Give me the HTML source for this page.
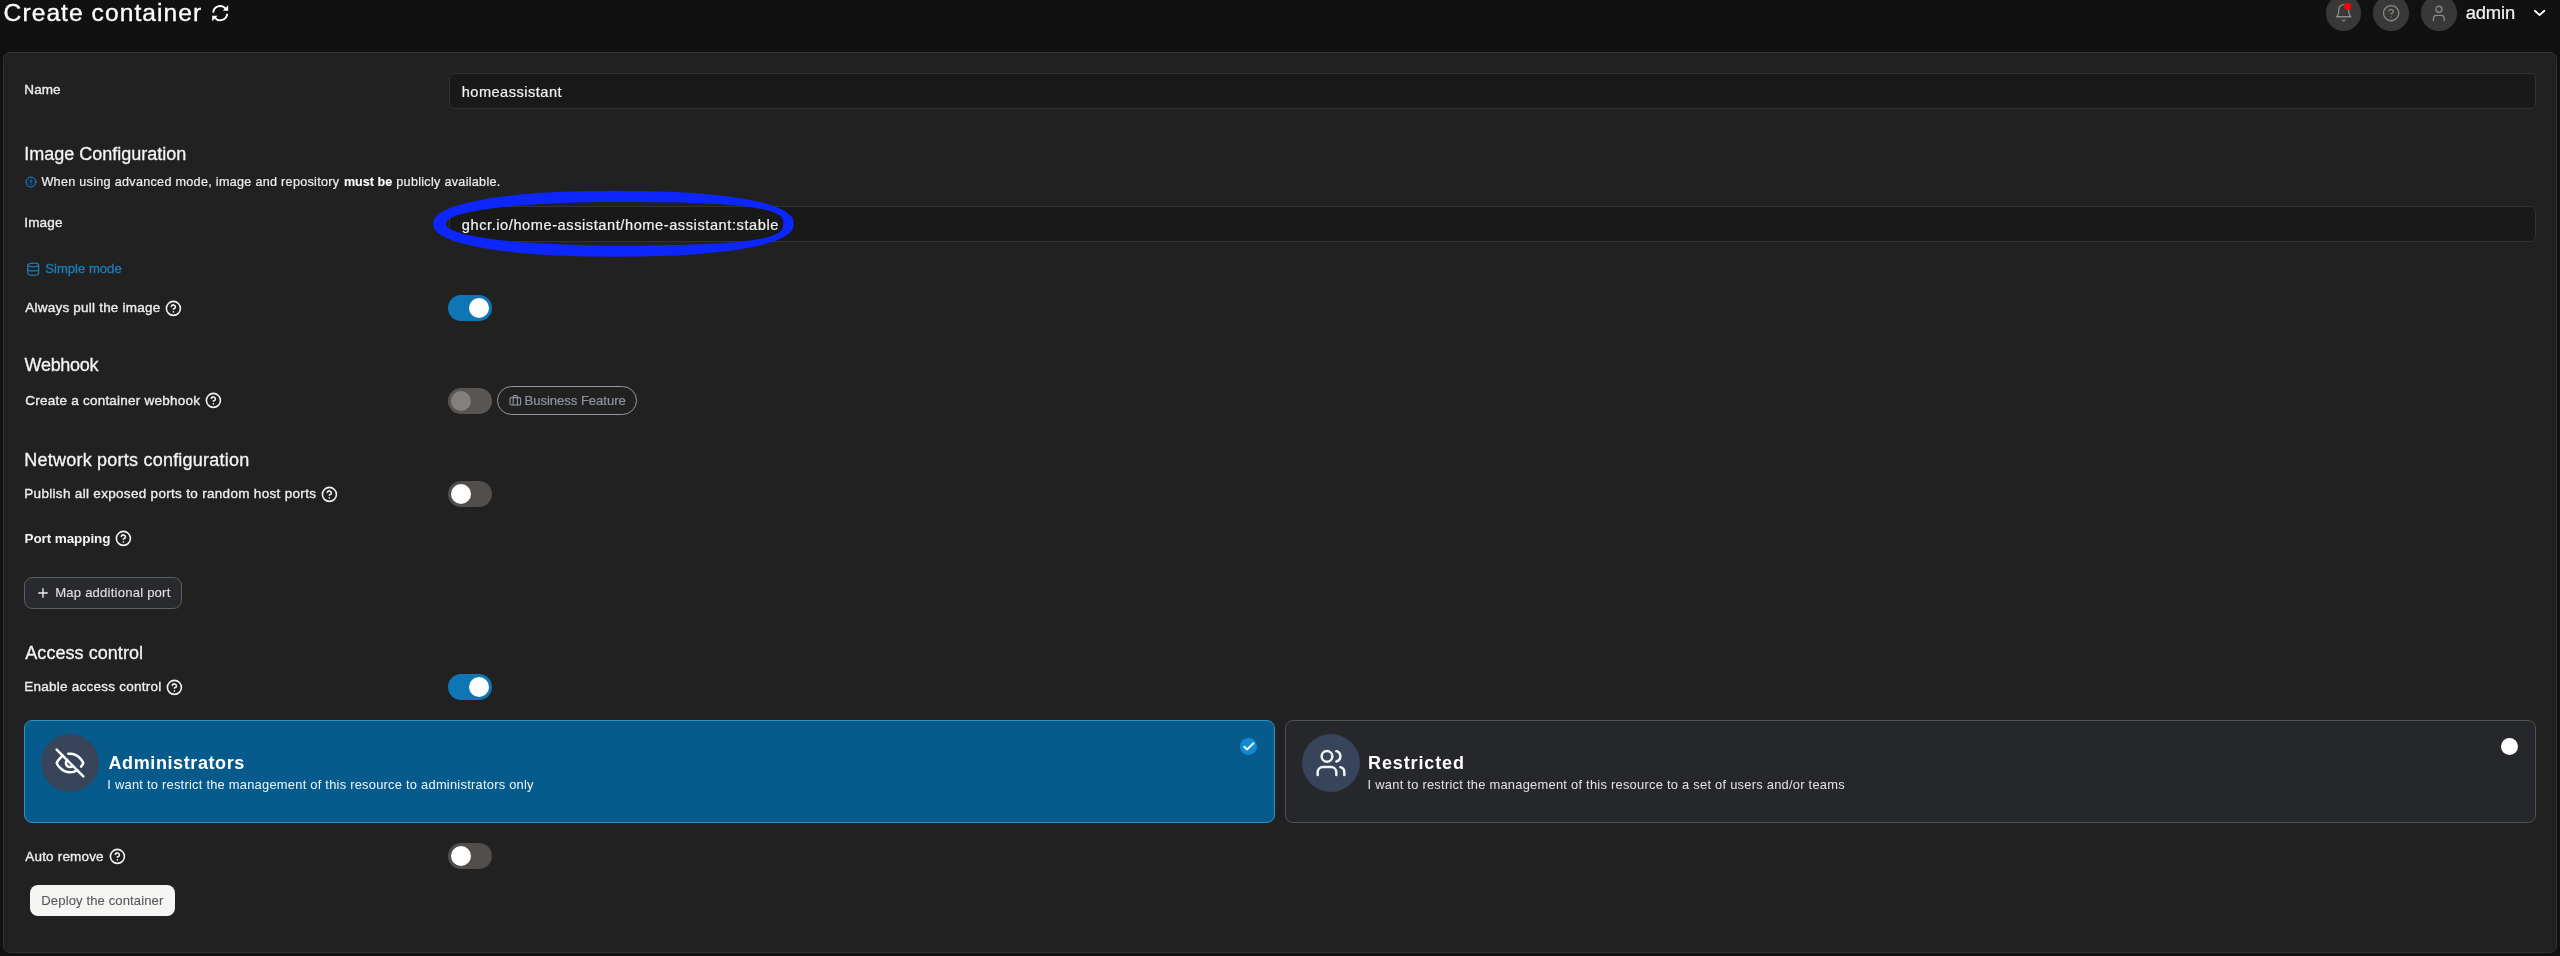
<!DOCTYPE html>
<html lang="en">
<head>
<meta charset="utf-8">
<title>Create container</title>
<style>
html,body{margin:0;padding:0;}
body{width:2560px;height:956px;overflow:hidden;background:#111111;position:relative;font-family:"Liberation Sans",sans-serif;}
#root{position:absolute;left:0;top:0;width:2560px;height:956px;will-change:transform;}
.t{position:absolute;white-space:pre;line-height:1;}
.abs{position:absolute;box-sizing:border-box;}
#panel{left:3px;top:52px;width:2554px;height:901px;background:#212121;border:1.4px solid #323232;border-radius:7px;}
.inp{left:448.6px;width:2087.4px;height:35.7px;background:#191919;border:1.3px solid #333333;border-radius:6px;}
.tog{width:44px;height:26px;border-radius:13px;left:448.3px;}
.tog i{position:absolute;top:3px;width:20px;height:20px;border-radius:50%;background:#ffffff;display:block;}
.tog.on{background:#0f76b5;}
.tog.on i{left:21px;}
.tog.off{background:#524e4b;}
.tog.off i{left:2.5px;}
.tog.dis{background:#595553;}
.tog.dis i{left:2.8px;background:#83807e;}
svg{position:absolute;overflow:visible;}
.hc{width:16.8px;height:16.8px;left:calc(var(--x) - 8.4px);top:calc(var(--y) - 8.4px);fill:none;stroke:#f2f2f2;stroke-width:2.3;stroke-linecap:round;stroke-linejoin:round;}
.circ{width:35.5px;height:35.5px;border-radius:50%;background:#383838;top:-4.7px;}
.box{top:720.1px;height:102.7px;border-radius:8px;}
.badge{width:58px;height:58px;border-radius:50%;background:#37445a;top:734.2px;}
</style>
</head>
<body>
<div id="root">

<!-- header -->
<span class="t" id="t-title" style="left:3.60px;top:1.00px;font-size:24.6px;font-weight:400;color:#ffffff;letter-spacing:1.051px;-webkit-text-stroke:0.35px #ffffff;">Create container</span>
<svg style="left:208px;top:0px;width:24px;height:26px" viewBox="208 0 24 26" fill="none" stroke="#ffffff" stroke-width="1.9" stroke-linecap="butt"><path d="M213.2 12.600A7 7 0 0 1 225.6 8.700"/><path d="M227.200 13.800A7 7 0 0 1 214.800 17.700"/><path d="M228.200 5.300V10.700H222.800Z" fill="#ffffff" stroke="none"/><path d="M212.200 21.200V15.800H217.600Z" fill="#ffffff" stroke="none"/></svg>

<div class="abs circ" style="left:2325.5px"></div>
<div class="abs circ" style="left:2373.2px"></div>
<div class="abs circ" style="left:2421px"></div>
<svg style="left:2333.6px;top:3px;width:19.4px;height:19.4px" viewBox="0 0 24 24" fill="none" stroke="#8f8983" stroke-width="1.6" stroke-linecap="round" stroke-linejoin="round"><path d="M18 8A6 6 0 0 0 6 8c0 7-3 9-3 9h18s-3-2-3-9"/><path d="M13.73 21a2 2 0 0 1-3.46 0"/></svg>
<div class="abs" style="left:2344.2px;top:3.4px;width:6.8px;height:6.8px;border-radius:50%;background:#ff0000"></div>
<svg style="left:2381.9px;top:3.6px;width:18.300px;height:18.300px" viewBox="0 0 24 24" fill="none" stroke="#8f8983" stroke-width="1.700" stroke-linecap="round" stroke-linejoin="round"><circle cx="12" cy="12" r="10"/><path d="M9.09 9a3 3 0 0 1 5.83 1c0 2-3 3-3 3"/><path d="M12 17h.01"/></svg>
<svg style="left:2428px;top:0px;width:22px;height:24px" viewBox="2428 0 22 24" fill="none" stroke="#8f8983" stroke-width="1.300" stroke-linecap="round" stroke-linejoin="round"><circle cx="2438.9" cy="9.3" r="3.05"/><path d="M2433.5 20.5v-2.200a3 3 0 0 1 3-3h4.700a3 3 0 0 1 3 3v2.200"/></svg>
<span class="t" id="t-admin" style="left:2465.80px;top:4.00px;font-size:18.4px;font-weight:400;color:#f4f4f4;letter-spacing:-0.190px;-webkit-text-stroke:0.2px #f4f4f4;">admin</span>
<svg style="left:2534.3px;top:9.9px;width:11.2px;height:5.8px" viewBox="0 0 12 6" preserveAspectRatio="none" fill="none" stroke="#ffffff" stroke-width="1.9" stroke-linecap="round" stroke-linejoin="round"><path d="M0.9 0.8L6 5.2L11.1 0.8"/></svg>

<!-- panel -->
<div id="panel" class="abs"></div>

<span class="t" id="t-name" style="left:24.30px;top:83.00px;font-size:13.5px;font-weight:400;color:#eeeeee;letter-spacing:0.099px;-webkit-text-stroke:0.35px #eeeeee;">Name</span>
<div class="abs inp" style="top:73px"></div>
<span class="t" id="t-nameval" style="left:461.70px;top:85.00px;font-size:14.6px;font-weight:400;color:#f2f2f2;letter-spacing:0.480px;-webkit-text-stroke:0.2px #f2f2f2;">homeassistant</span>

<span class="t" id="t-h1" style="left:24.30px;top:145.00px;font-size:18px;font-weight:400;color:#f4f4f4;letter-spacing:-0.010px;-webkit-text-stroke:0.3px #f4f4f4;">Image Configuration</span>
<svg style="left:24.7px;top:176.3px;width:12px;height:12px" viewBox="0 0 24 24" fill="#0e2c47" stroke="#2f83b3" stroke-width="1.9" stroke-linecap="round" stroke-linejoin="round"><circle cx="12" cy="12" r="10"/><path d="M12 7.5v5.500"/><path d="M12 16.500h.01"/></svg>
<span class="t" id="t-info1" style="left:41.40px;top:176.00px;font-size:12.6px;font-weight:400;color:#efefef;letter-spacing:0.299px;-webkit-text-stroke:0.2px #efefef;">When using advanced mode, image and repository</span><span class="t" id="t-info2" style="left:343.90px;top:176.00px;font-size:12.6px;font-weight:700;color:#ffffff;letter-spacing:0.003px;-webkit-text-stroke:0.1px #ffffff;">must be</span><span class="t" id="t-info3" style="left:396.30px;top:176.00px;font-size:12.6px;font-weight:400;color:#efefef;letter-spacing:0.294px;-webkit-text-stroke:0.2px #efefef;">publicly available.</span>

<span class="t" id="t-image" style="left:24.30px;top:216.00px;font-size:13.5px;font-weight:400;color:#eeeeee;letter-spacing:0.147px;-webkit-text-stroke:0.35px #eeeeee;">Image</span>
<div class="abs inp" style="top:206.3px"></div>
<span class="t" id="t-imageval" style="left:461.80px;top:218.00px;font-size:14.6px;font-weight:400;color:#f2f2f2;letter-spacing:0.570px;-webkit-text-stroke:0.2px #f2f2f2;">ghcr.io/home-assistant/home-assistant:stable</span>
<svg style="left:420px;top:180px;width:400px;height:90px" viewBox="420 180 400 90"><path fill="#0c26fb" fill-rule="evenodd" style="filter:blur(0.55px)" d="M793.8 223.8L793.5 226.8L792.5 229.4L790.8 231.7L788.4 233.9L785.4 236.0L781.8 238.0L777.5 240.0L772.6 241.8L767.1 243.5L760.9 245.2L754.2 246.7L746.9 248.1L739.0 249.5L730.6 250.7L721.6 251.8L712.1 252.8L702.1 253.7L691.7 254.5L680.6 255.2L669.1 255.7L657.0 256.1L644.1 256.5L630.2 256.6L613.4 256.7L598.3 256.6L585.1 256.4L572.6 256.1L560.6 255.7L549.1 255.1L538.1 254.4L527.5 253.6L517.3 252.7L507.7 251.6L498.5 250.4L489.9 249.2L481.8 247.8L474.2 246.3L467.2 244.7L460.9 243.1L455.1 241.3L450.0 239.4L445.5 237.5L441.7 235.5L438.6 233.4L436.2 231.2L434.4 228.9L433.4 226.5L433.0 223.8L433.4 221.0L434.4 218.6L436.2 216.3L438.6 214.1L441.7 212.0L445.5 210.0L450.0 208.1L455.1 206.2L460.9 204.4L467.2 202.8L474.2 201.2L481.8 199.7L489.9 198.3L498.5 197.1L507.7 195.9L517.3 194.8L527.5 193.9L538.1 193.1L549.1 192.4L560.6 191.8L572.6 191.4L585.1 191.1L598.3 190.9L613.4 190.8L630.2 190.9L644.1 191.0L657.0 191.4L669.1 191.8L680.6 192.3L691.7 193.0L702.1 193.8L712.1 194.7L721.6 195.7L730.6 196.8L739.0 198.0L746.9 199.4L754.2 200.8L760.9 202.3L767.1 204.0L772.6 205.7L777.5 207.5L781.8 209.5L785.4 211.5L788.4 213.6L790.8 215.8L792.5 218.1L793.5 220.7ZM783.1 220.4L782.3 218.4L781.1 216.7L779.3 215.2L777.1 213.9L774.3 212.6L771.1 211.4L767.4 210.3L763.1 209.3L758.4 208.4L753.2 207.5L747.4 206.7L741.2 206.0L734.4 205.3L727.1 204.7L719.2 204.1L710.7 203.7L701.6 203.3L691.8 202.9L681.0 202.6L669.3 202.4L656.1 202.2L640.4 202.1L614.6 202.1L602.1 202.1L590.4 202.3L579.1 202.5L568.1 202.8L557.4 203.2L547.1 203.7L537.1 204.2L527.5 204.9L518.3 205.6L509.5 206.4L501.2 207.3L493.4 208.2L486.1 209.2L479.4 210.3L473.2 211.4L467.6 212.6L462.6 213.8L458.2 215.1L454.5 216.4L451.5 217.8L449.1 219.2L447.4 220.6L446.3 222.1L446.0 223.8L446.3 225.4L447.4 226.9L449.1 228.3L451.5 229.7L454.5 231.1L458.2 232.4L462.6 233.7L467.6 234.9L473.2 236.1L479.4 237.2L486.1 238.3L493.4 239.3L501.2 240.2L509.5 241.1L518.3 241.9L527.5 242.6L537.1 243.3L547.1 243.8L557.4 244.3L568.1 244.7L579.1 245.0L590.4 245.2L602.1 245.4L614.7 245.4L640.4 245.4L656.1 245.3L669.3 245.1L681.0 244.9L691.8 244.6L701.6 244.2L710.7 243.8L719.2 243.4L727.1 242.8L734.4 242.2L741.2 241.5L747.4 240.8L753.2 240.0L758.4 239.1L763.1 238.2L767.4 237.2L771.1 236.1L774.3 234.9L777.1 233.6L779.3 232.3L781.1 230.8L782.3 229.1L783.1 227.1L783.3 223.8Z"/></svg>

<svg style="left:25.8px;top:261.500px;width:14.400px;height:14.400px" viewBox="0 0 24 24" fill="none" stroke="#1c7db8" stroke-width="2.1" stroke-linecap="round" stroke-linejoin="round"><ellipse cx="12" cy="5" rx="9" ry="3"/><path d="M3 5v14a9 3 0 0 0 18 0V5"/><path d="M3 12a9 3 0 0 0 18 0"/></svg>
<span class="t" id="t-simple" style="left:45.30px;top:262.00px;font-size:13.1px;font-weight:400;color:#1c7db8;letter-spacing:-0.003px;-webkit-text-stroke:0.3px #1c7db8;">Simple mode</span>

<span class="t" id="t-pull" style="left:25.30px;top:301.00px;font-size:13.5px;font-weight:400;color:#eeeeee;letter-spacing:0.217px;-webkit-text-stroke:0.35px #eeeeee;">Always pull the image</span>
<svg class="hc" style="--x:173.1px;--y:308.1px" viewBox="0 0 24 24"><circle cx="12" cy="12" r="10"/><path d="M9.09 9a3 3 0 0 1 5.83 1c0 2-3 3-3 3"/><path d="M12 17h.01"/></svg>
<div class="abs tog on" style="top:294.8px"><i></i></div>

<span class="t" id="t-h2" style="left:24.60px;top:356.00px;font-size:18px;font-weight:400;color:#f4f4f4;letter-spacing:-0.303px;-webkit-text-stroke:0.3px #f4f4f4;">Webhook</span>
<span class="t" id="t-webhook" style="left:25.30px;top:394.00px;font-size:13.5px;font-weight:400;color:#eeeeee;letter-spacing:0.232px;-webkit-text-stroke:0.35px #eeeeee;">Create a container webhook</span>
<svg class="hc" style="--x:213.6px;--y:400.5px" viewBox="0 0 24 24"><circle cx="12" cy="12" r="10"/><path d="M9.09 9a3 3 0 0 1 5.83 1c0 2-3 3-3 3"/><path d="M12 17h.01"/></svg>
<div class="abs tog dis" style="top:388px"><i></i></div>
<div class="abs" style="left:497px;top:386px;width:140px;height:29.3px;border:1.3px solid #9297a0;border-radius:15px;"></div>
<svg style="left:508.600px;top:394.200px;width:12.600px;height:12.600px" viewBox="0 0 24 24" fill="none" stroke="#9096a0" stroke-width="2.1" stroke-linecap="round" stroke-linejoin="round"><rect x="2" y="7" width="20" height="14" rx="2"/><path d="M16 21V5a2 2 0 0 0-2-2h-4a2 2 0 0 0-2 2v16"/></svg>
<span class="t" id="t-be" style="left:524.50px;top:394.00px;font-size:13.1px;font-weight:400;color:#9096a0;letter-spacing:-0.041px;-webkit-text-stroke:0.2px #9096a0;">Business Feature</span>

<span class="t" id="t-h3" style="left:24.30px;top:451.00px;font-size:18px;font-weight:400;color:#f4f4f4;letter-spacing:0.223px;-webkit-text-stroke:0.3px #f4f4f4;">Network ports configuration</span>
<span class="t" id="t-publish" style="left:24.30px;top:487.00px;font-size:13.5px;font-weight:400;color:#eeeeee;letter-spacing:0.311px;-webkit-text-stroke:0.35px #eeeeee;">Publish all exposed ports to random host ports</span>
<svg class="hc" style="--x:329.0px;--y:494.2px" viewBox="0 0 24 24"><circle cx="12" cy="12" r="10"/><path d="M9.09 9a3 3 0 0 1 5.83 1c0 2-3 3-3 3"/><path d="M12 17h.01"/></svg>
<div class="abs tog off" style="top:480.600px"><i></i></div>

<span class="t" id="t-portmap" style="left:24.50px;top:532.00px;font-size:13.5px;font-weight:700;color:#f4f4f4;letter-spacing:-0.096px;">Port mapping</span>
<svg class="hc" style="--x:123.2px;--y:538.7px" viewBox="0 0 24 24"><circle cx="12" cy="12" r="10"/><path d="M9.09 9a3 3 0 0 1 5.83 1c0 2-3 3-3 3"/><path d="M12 17h.01"/></svg>

<div class="abs" style="left:24.200px;top:577.200px;width:158.1px;height:31.7px;background:#292a2e;border:1.2px solid #5d6067;border-radius:8.5px;"></div>
<svg style="left:36.800px;top:586.900px;width:12px;height:12px" viewBox="0 0 24 24" fill="none" stroke="#f0f0f0" stroke-width="2.7" stroke-linecap="round"><path d="M12 3.500v17M3.500 12h17"/></svg>
<span class="t" id="t-mapbtn" style="left:55.20px;top:586.00px;font-size:13.1px;font-weight:400;color:#e2e2e2;letter-spacing:0.209px;-webkit-text-stroke:0.1px #e2e2e2;">Map additional port</span>

<span class="t" id="t-h4" style="left:25.30px;top:644.00px;font-size:18px;font-weight:400;color:#f4f4f4;letter-spacing:0.050px;-webkit-text-stroke:0.3px #f4f4f4;">Access control</span>
<span class="t" id="t-enable" style="left:24.30px;top:680.00px;font-size:13.5px;font-weight:400;color:#eeeeee;letter-spacing:0.241px;-webkit-text-stroke:0.35px #eeeeee;">Enable access control</span>
<svg class="hc" style="--x:174.3px;--y:687.0px" viewBox="0 0 24 24"><circle cx="12" cy="12" r="10"/><path d="M9.09 9a3 3 0 0 1 5.83 1c0 2-3 3-3 3"/><path d="M12 17h.01"/></svg>
<div class="abs tog on" style="top:673.600px"><i></i></div>

<!-- box selector -->
<div class="abs box" style="left:24px;width:1251px;background:#075a8c;border:1.2px solid #3191c9;"></div>
<div class="abs badge" style="left:41px"></div>
<svg style="left:54.1px;top:747.2px;width:32px;height:32px" viewBox="0 0 24 24" fill="none" stroke="#ffffff" stroke-width="1.85" stroke-linecap="round" stroke-linejoin="round"><path d="M9.88 9.88a3 3 0 1 0 4.240 4.240"/><path d="M10.730 5.080A10.430 10.430 0 0 1 12 5c7 0 10 7 10 7a13.160 13.160 0 0 1-1.670 2.680"/><path d="M6.610 6.610A13.526 13.526 0 0 0 2 12s3 7 10 7a9.740 9.740 0 0 0 5.390-1.610"/><path d="M2 2l20 20"/></svg>
<span class="t" id="t-adm" style="left:108.50px;top:754.00px;font-size:18px;font-weight:700;color:#ffffff;letter-spacing:0.599px;">Administrators</span>
<span class="t" id="t-admd" style="left:107.30px;top:779.00px;font-size:12.9px;font-weight:400;color:#f2f6fa;letter-spacing:0.238px;">I want to restrict the management of this resource to administrators only</span>
<div class="abs" style="left:1240.4px;top:738.1px;width:16.8px;height:16.8px;border-radius:50%;background:#108ad4"></div>
<svg style="left:1240px;top:738px;width:18px;height:18px" viewBox="1240 738 18 18" fill="none" stroke="#e8fbff" stroke-width="1.9" stroke-linecap="round" stroke-linejoin="round"><path d="M1244.3 746.8L1247.1 749.5L1253.4 743.3"/></svg>

<div class="abs box" style="left:1285.300px;width:1250.700px;background:#26272b;border:1.3px solid #4f5259;"></div>
<div class="abs badge" style="left:1301.800px"></div>
<svg style="left:1314.8px;top:747.3px;width:32px;height:32px" viewBox="0 0 24 24" fill="none" stroke="#f4f4f4" stroke-width="1.85" stroke-linecap="round" stroke-linejoin="round"><path d="M16 21v-2a4 4 0 0 0-4-4H6a4 4 0 0 0-4 4v2"/><circle cx="9" cy="7" r="4"/><path d="M22 21v-2a4 4 0 0 0-3-3.870"/><path d="M16 3.130a4 4 0 0 1 0 7.750"/></svg>
<span class="t" id="t-res" style="left:1368.00px;top:754.00px;font-size:18px;font-weight:700;color:#ffffff;letter-spacing:0.885px;">Restricted</span>
<span class="t" id="t-resd" style="left:1367.60px;top:779.00px;font-size:12.9px;font-weight:400;color:#e4e4e4;letter-spacing:0.250px;">I want to restrict the management of this resource to a set of users and/or teams</span>
<div class="abs" style="left:2501.200px;top:738.100px;width:17px;height:17px;border-radius:50%;background:#ffffff"></div>

<span class="t" id="t-auto" style="left:25.30px;top:850.00px;font-size:13.5px;font-weight:400;color:#eeeeee;letter-spacing:0.177px;-webkit-text-stroke:0.35px #eeeeee;">Auto remove</span>
<svg class="hc" style="--x:117.0px;--y:856.8px" viewBox="0 0 24 24"><circle cx="12" cy="12" r="10"/><path d="M9.09 9a3 3 0 0 1 5.83 1c0 2-3 3-3 3"/><path d="M12 17h.01"/></svg>
<div class="abs tog off" style="top:843.400px"><i></i></div>

<div class="abs" style="left:29.500px;top:885px;width:145.600px;height:30.700px;background:#f5f5f4;border-radius:8px;"></div>
<span class="t" id="t-deploy" style="left:41.30px;top:894.00px;font-size:13.1px;font-weight:400;color:#585858;letter-spacing:0.103px;-webkit-text-stroke:0.1px #585858;">Deploy the container</span>

</div>
</body>
</html>
